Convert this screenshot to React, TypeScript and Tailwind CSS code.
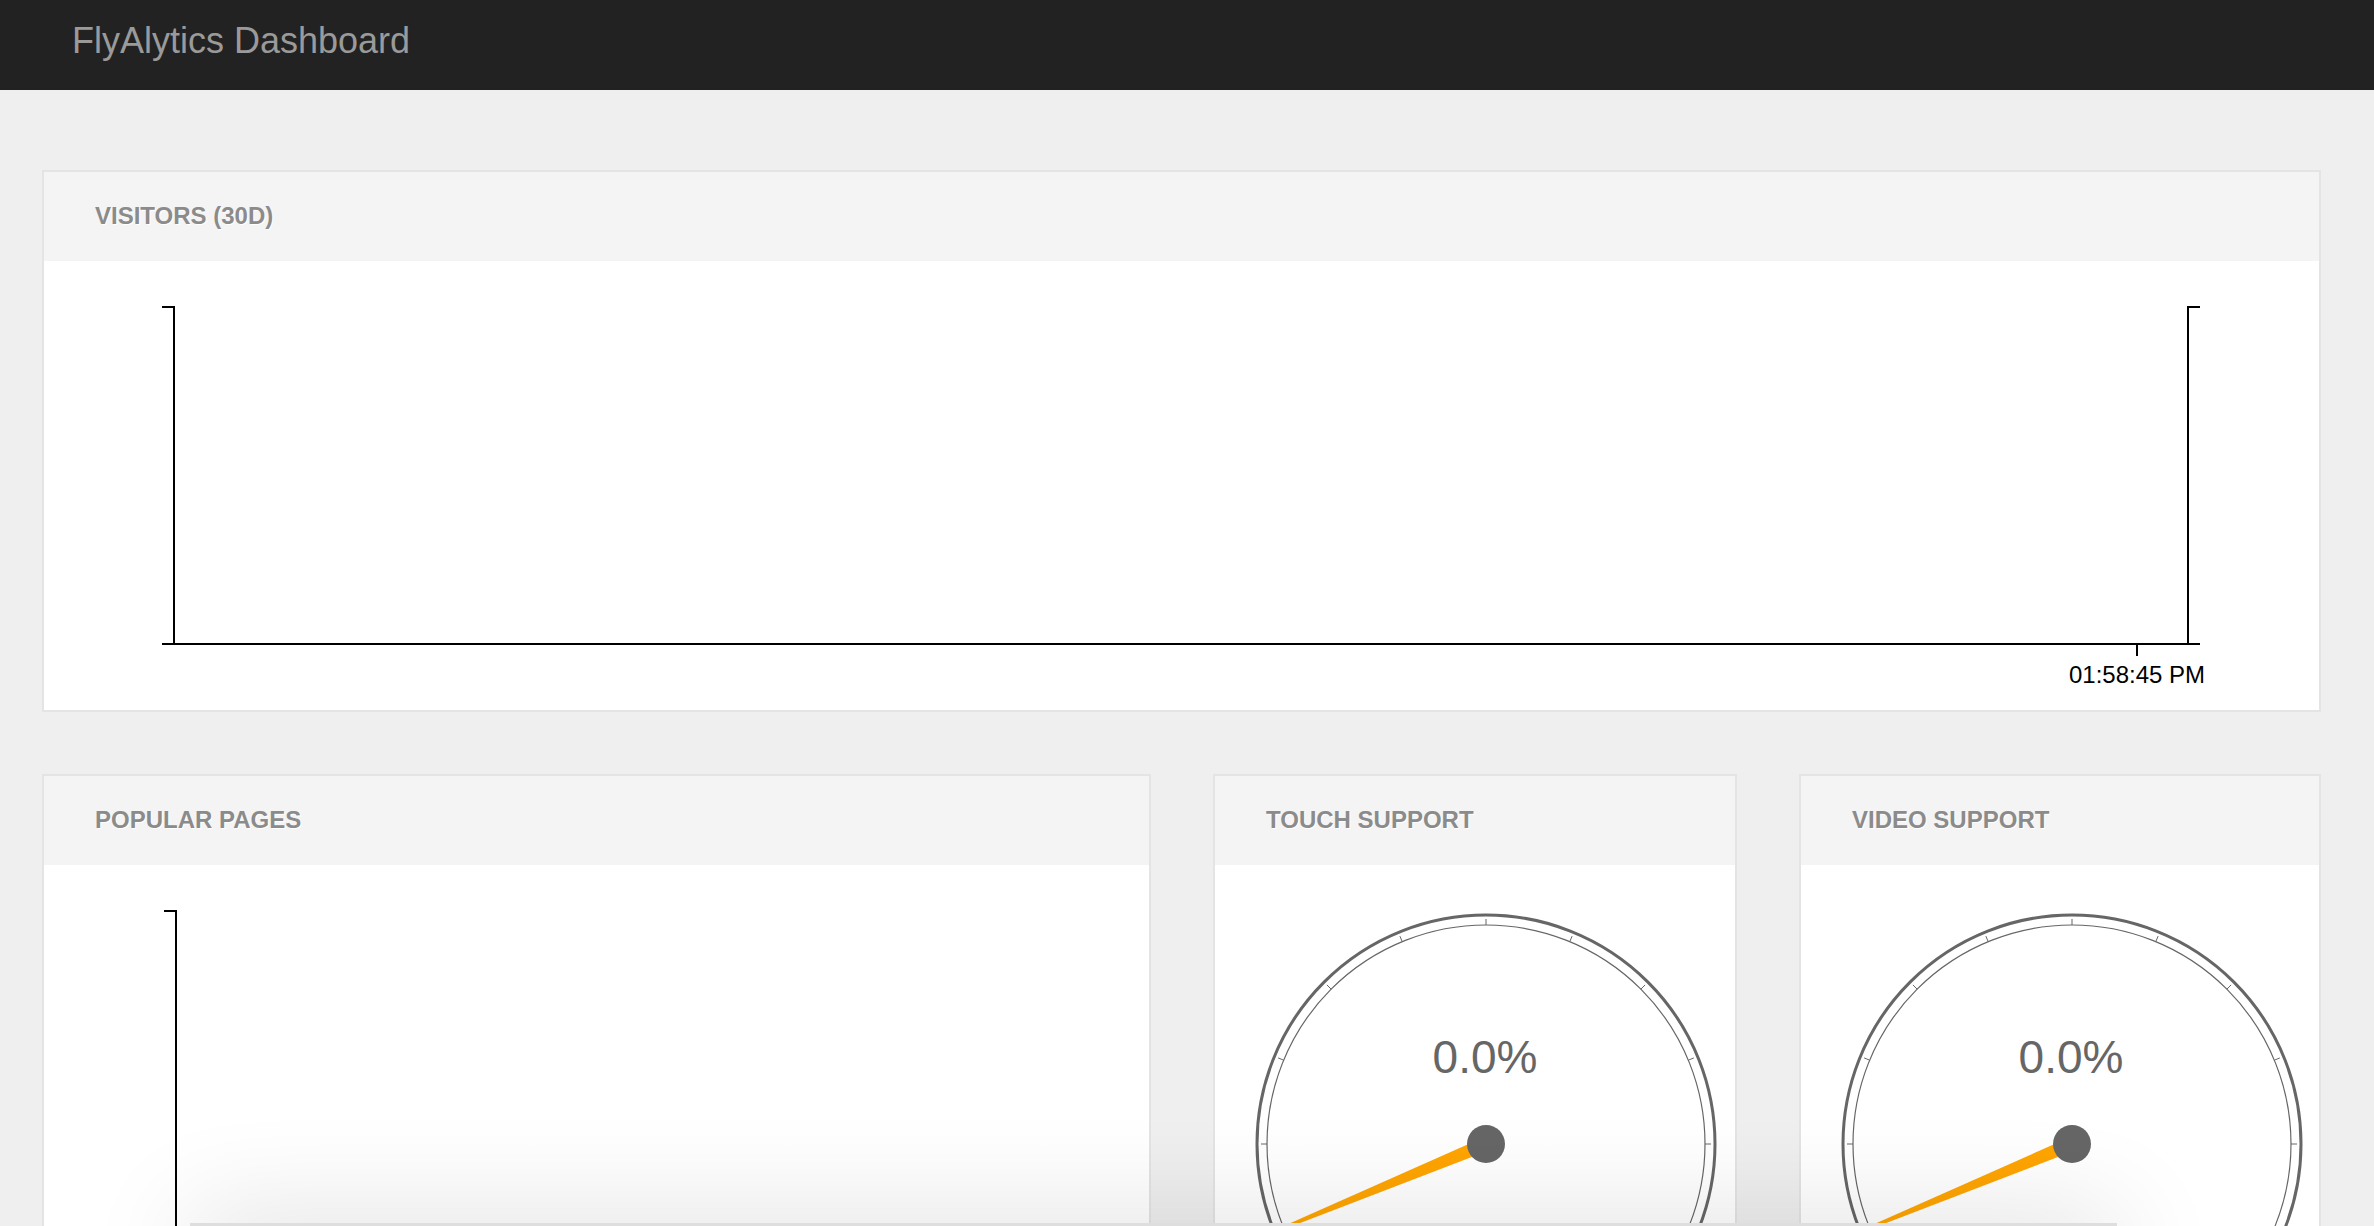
import React from 'react';

const font = { fontFamily: '"Liberation Sans", Arial, Helvetica, sans-serif' };

const Card = ({ title, className, bodyClass, children }: { title: string; className?: string; bodyClass?: string; children?: React.ReactNode }) => (
  <div className={`border-2 border-[#e4e4e4] bg-white ${className ?? ''}`}>
    <div className="h-[89px] bg-[#f4f4f4] pl-[51px] pt-[32px]">
      <h2 className="text-[24px] leading-none font-bold uppercase text-[#8b8b8b] [text-shadow:1px_1px_0_#fff]">{title}</h2>
    </div>
    <div className={bodyClass}>{children}</div>
  </div>
);

const Gauge = ({ value }: { value: string }) => {
  const cx = 271;
  const cy = 279;
  const ticks = [];
  for (let a = -180; a < 180; a += 22.5) {
    const r = (a * Math.PI) / 180;
    const s = Math.sin(r);
    const c = -Math.cos(r);
    ticks.push(
      <line key={a} x1={cx + 219 * s} y1={cy + 219 * c} x2={cx + 225 * s} y2={cy + 225 * c} stroke="#666" strokeWidth={1} />
    );
  }
  return (
    <svg width="520" height="560" className="block">
      <circle cx={cx} cy={cy} r={229} fill="none" stroke="#666" strokeWidth={3} />
      <circle cx={cx} cy={cy} r={219} fill="none" stroke="#666" strokeWidth={1.2} />
      {ticks}
      <text x={cx - 1} y={208} textAnchor="middle" fontSize={46} fill="#666" style={font}>
        {value}
      </text>
      <g transform={`translate(${cx} ${cy}) rotate(157.5)`}>
        <polygon points="0,-7 220,-1.5 220,1.5 0,7" fill="#ffa500" />
      </g>
      <circle cx={cx} cy={cy} r={19} fill="#666" />
    </svg>
  );
};

export default function App() {
  return (
    <div className="min-h-screen bg-[#efefef]" style={font}>
      {/* Top bar */}
      <div className="h-[90px] bg-[#222222] pl-[72px] pt-[23px]">
        <h1 className="text-[36px] leading-none text-[#9a9a9a]">FlyAlytics Dashboard</h1>
      </div>

      <div className="pl-[42px] pr-[53px] pt-[80px]">
        {/* Visitors */}
        <Card title="Visitors (30D)" bodyClass="h-[449px]">
          <svg width="2275" height="449" className="block" shapeRendering="crispEdges">
            <path d="M118,46H130V383" fill="none" stroke="#000" strokeWidth={2} />
            <path d="M118,383H2156" fill="none" stroke="#000" strokeWidth={2} />
            <path d="M2156,46H2144V383" fill="none" stroke="#000" strokeWidth={2} />
            <path d="M2093,383V395" fill="none" stroke="#000" strokeWidth={1.5} />
            <text x={2093} y={422} textAnchor="middle" fontSize={24} fill="#000" style={font} shapeRendering="auto">
              01:58:45 PM
            </text>
          </svg>
        </Card>

        {/* Second row */}
        <div className="mt-[62px] grid grid-cols-[1109px_524px_522px] gap-x-[62px]">
          <Card title="Popular Pages" bodyClass="h-[600px]">
            <svg width="1105" height="600" className="block" shapeRendering="crispEdges">
              <path d="M120,46H132V600" fill="none" stroke="#000" strokeWidth={2} />
            </svg>
          </Card>
          <Card title="Touch Support" bodyClass="h-[600px]">
            <Gauge value="0.0%" />
          </Card>
          <Card title="Video Support" bodyClass="h-[600px]">
            <Gauge value="0.0%" />
          </Card>
        </div>
      </div>

      {/* shadow of the panel sitting just under the window edge */}
      <div className="fixed left-[190px] top-[1223px] h-[60px] w-[1927px] bg-[#dedede] shadow-[0_0_110px_rgba(0,0,0,0.16)]" />
    </div>
  );
}
